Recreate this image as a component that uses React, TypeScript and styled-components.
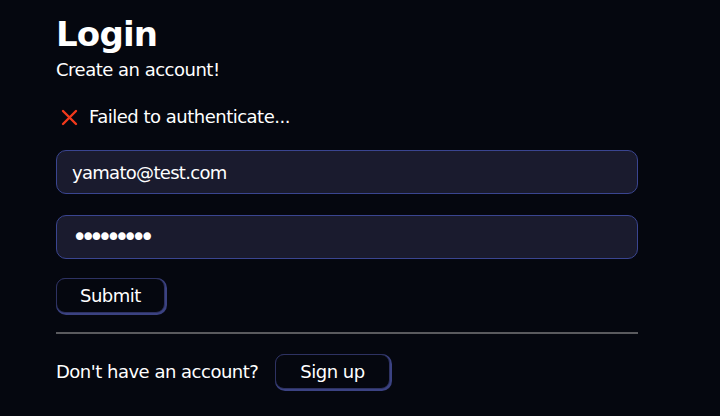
import React from "react";
import styled, { createGlobalStyle } from "styled-components";

const Global = createGlobalStyle`
  html, body { margin: 0; padding: 0; background: #05070f; }
  body { font-family: "DejaVu Sans", Verdana, sans-serif; color: #ffffff; letter-spacing: -0.5px; }
  * { box-sizing: border-box; }
`;

const Page = styled.main`
  width: 720px;
  height: 416px;
  padding: 14px 82px 0 56px;
  display: flex;
  flex-direction: column;
  overflow: hidden;
`;

const Title = styled.h1`
  margin: 0;
  font-size: 34px;
  line-height: 40px;
  font-weight: bold;
  letter-spacing: -0.8px;
`;

const Subtitle = styled.p`
  margin: 5px 0 0;
  font-size: 18px;
  line-height: 22px;
`;

const ErrorRow = styled.div`
  margin-top: 25px;
  display: flex;
  align-items: center;
  gap: 11px;
  font-size: 18px;
  line-height: 22px;
  padding-left: 5px;
`;

const Form = styled.form`
  margin-top: 22px;
  display: flex;
  flex-direction: column;
  align-items: flex-start;
`;

const Input = styled.input<{ $gap: number }>`
  width: 582px;
  height: 44px;
  margin-bottom: ${(p) => p.$gap}px;
  padding: 0 15px;
  background: #1a1b2e;
  border: 1px solid #3a4590;
  border-radius: 10px;
  color: #ffffff;
  font-family: "DejaVu Sans", Verdana, sans-serif;
  font-size: 18px;
  letter-spacing: -0.7px;
  outline: none;

  &[type="password"] {
    font-size: 26px;
    letter-spacing: -6.9px;
  }
`;

const Button = styled.button<{ $pad: number }>`
  height: 35px;
  padding: 0 ${(p) => p.$pad}px;
  background: #05070f;
  color: #ffffff;
  border: 1px solid #2e3262;
  border-radius: 9px;
  box-shadow: 1px 1px 0 1px #3b4282;
  font-family: "DejaVu Sans", Verdana, sans-serif;
  font-size: 18px;
  letter-spacing: -0.5px;
  cursor: pointer;
`;

const Divider = styled.hr`
  width: 582px;
  margin: 19px 0 0;
  border: none;
  border-top: 2px solid #5a5a5e;
`;

const Footer = styled.div`
  margin-top: 20px;
  display: flex;
  align-items: center;
  gap: 17px;
  font-size: 18px;
`;

const Cross = () => (
  <svg width="17" height="17" viewBox="0 0 17 17">
    <path d="M2 2 L15 15 M15 2 L2 15" stroke="#f2391b" strokeWidth="2.4" strokeLinecap="round" />
  </svg>
);

export default function App() {
  return (
    <>
      <Global />
      <Page>
        <Title>Login</Title>
        <Subtitle>Create an account!</Subtitle>
        <ErrorRow>
          <Cross />
          <span>Failed to authenticate...</span>
        </ErrorRow>
        <Form onSubmit={(e) => e.preventDefault()}>
          <Input $gap={21} type="email" defaultValue="yamato@test.com" />
          <Input $gap={19} type="password" defaultValue="123456789" />
          <Button $pad={23} type="submit">Submit</Button>
          <Divider />
        </Form>
        <Footer>
          <span>Don't have an account?</span>
          <Button $pad={24} type="button">Sign up</Button>
        </Footer>
      </Page>
    </>
  );
}
